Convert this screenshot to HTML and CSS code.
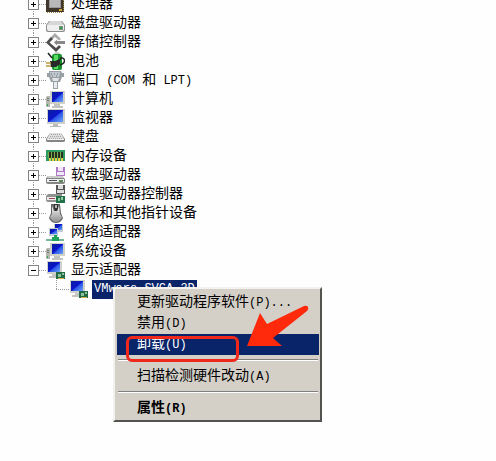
FILE: index.html
```html
<!DOCTYPE html>
<html lang="zh-CN">

<head>
    <meta charset="utf-8">
    <title>设备管理器</title>
    <link rel="stylesheet" href="styles.css">
</head>

<body>
    <!-- Shared icon parts -->
    <svg class="defs" aria-hidden="true">
        <defs>
            <linearGradient id="screen" x1="0" y1="0" x2="1" y2="1">
                <stop offset="0" stop-color="#0a1f9a" />
                <stop offset="0.5" stop-color="#0c14cc" />
                <stop offset="0.55" stop-color="#2a52e6" />
                <stop offset="1" stop-color="#6aa4fb" />
            </linearGradient>
            <linearGradient id="metal" x1="0" y1="0" x2="0" y2="1">
                <stop offset="0" stop-color="#f4f4f4" />
                <stop offset="1" stop-color="#8f9090" />
            </linearGradient>
            <symbol id="pc" viewBox="0 0 19 19">
                <path d="M8 14h6v2h3v2H6v-2h2z" fill="#c2c4c0" />
                <path d="M4 1h15v13H4z" fill="#cfd0c8" />
                <path d="M6 2h11v10H6z" fill="url(#screen)" />
                <path d="M1 6h3v11H0V7z" fill="#b4b8b0" />
                <path d="M1 8h2v1H1zM1 10h2v1H1z" fill="#707870" />
                <path d="M1 14h1v2H1z" fill="#38a050" />
            </symbol>
            <symbol id="display" viewBox="0 0 19 19">
                <path d="M6 12h6v3h2v2H3v-2h3z" fill="#c4c6c2" />
                <path d="M1 0h15v13H1z" fill="#d0d1ca" />
                <path d="M2 1h12v10H2z" fill="url(#screen)" />
                <path d="M10 11h9v7h-9z" fill="#246b45" />
                <path d="M12 13h3v3h-3zM16 12h2v2h-2z" fill="#8bc39a" />
                <path d="M12 17h6v1h-6z" fill="#d4b445" />
            </symbol>
        </defs>
    </svg>

    <ul class="tree">
        <li class="node">
            <div class="row">
                <button class="toggle" aria-label="展开"></button>
                <svg class="icon" viewBox="0 0 19 19">
                    <path d="M0 0h18v17H0z" fill="#40382c" />
                    <path d="M1 17.500h16M17.500 1v16" stroke="#a18b46" stroke-dasharray="1 1" />
                    <path d="M3 1h12v12H3z" fill="#999" />
                    <path d="M4 1h10v11H4z" fill="#b9b9b9" />
                    <path d="M13 14h3v2h-3z" fill="#d2a93e" />
                </svg>
                <span class="label">处理器</span>
            </div>
        </li>
        <li class="node">
            <div class="row">
                <button class="toggle" aria-label="展开"></button>
                <svg class="icon" viewBox="0 0 19 19">
                    <path d="M3 7h13l3 4v5q0 2-2 2H2q-2 0-2-2v-5z" fill="#8b8e8d" />
                    <path d="M4 7h11l3 4H1z" fill="#d6d8d8" />
                    <path d="M1 11h17v4q0 2-2 2H3q-2 0-2-2z" fill="#efefef" />
                    <path d="M13 12h4v4h-4z" fill="#7d9580" />
                    <path d="M14 13h2v2h-2z" fill="#2e9e43" />
                </svg>
                <span class="label">磁盘驱动器</span>
            </div>
        </li>
        <li class="node">
            <div class="row">
                <button class="toggle" aria-label="展开"></button>
                <svg class="icon" viewBox="0 0 19 19">
                    <path d="M9 0l6 6-2 1.500-4-3.500-4 3.500L3 6z" fill="#aaa" />
                    <path d="M5 4l2 2-3.500 3.500L10 15l3-3 2 2-5 5L0 9.500z" fill="#4c4c4c" />
                    <path d="M8 9.500l3-3V8h8v3h-8v1.500z" fill="#888" />
                </svg>
                <span class="label">存储控制器</span>
            </div>
        </li>
        <li class="node">
            <div class="row">
                <button class="toggle" aria-label="展开"></button>
                <svg class="icon" viewBox="0 0 19 19">
                    <path d="M8 1q3-2 6 0v2H8z" fill="#c3c9c1" />
                    <rect x="6" y="2" width="10" height="16" rx="2" fill="#16912b" />
                    <path d="M8 3h4v14H8z" fill="#56db60" />
                    <path d="M2 1l4 5M14 8q1-4 4-1 2 4-4 6" fill="none" stroke="#222" stroke-width="1.500" />
                    <path d="M4 9h5l5-2v5l-4 3H5z" fill="#282828" />
                    <path d="M0 11h5M0 14h5" stroke="#b89a3a" stroke-width="1.500" />
                </svg>
                <span class="label">电池</span>
            </div>
        </li>
        <li class="node">
            <div class="row">
                <button class="toggle" aria-label="展开"></button>
                <svg class="icon" viewBox="0 0 19 19">
                    <path d="M3 0h12l1 2h2v4h-2l-2 5h-2v7H7v-7H5L3 6H1V2h2z" fill="#98a0a6" />
                    <path d="M4 1h10l-1 5H5z" fill="#c1c9cf" />
                    <path d="M5 3h1M8 3h1M11 3h1M6 5h1M10 5h1" stroke="#64717b" />
                    <path d="M6 7h7l-1 3H7z" fill="#dfe4e8" />
                    <path d="M8 11h3v6H8z" fill="#e8ecef" />
                </svg>
                <span class="label">端口<span class="latin"> (COM </span>和<span class="latin"> LPT)</span></span>
            </div>
        </li>
        <li class="node">
            <div class="row">
                <button class="toggle" aria-label="展开"></button>
                <svg class="icon"><use href="#pc" /></svg>
                <span class="label">计算机</span>
            </div>
        </li>
        <li class="node">
            <div class="row">
                <button class="toggle" aria-label="展开"></button>
                <svg class="icon" viewBox="0 0 19 19">
                    <path d="M7 15h5v2h3v1H4v-1h3z" fill="#b7bab7" />
                    <path d="M1 0h18v15H1z" fill="#cdcec7" />
                    <path d="M2 1h15v12H2z" fill="url(#screen)" />
                </svg>
                <span class="label">监视器</span>
            </div>
        </li>
        <li class="node">
            <div class="row">
                <button class="toggle" aria-label="展开"></button>
                <svg class="icon" viewBox="0 0 19 19">
                    <path d="M4 5h11l4 6v2q0 1-2 1H2q-2 0-2-1v-2z" fill="#858585" />
                    <path d="M4 5h11l3 6H1z" fill="#dedede" />
                    <path d="M5 6.500h10M4 8.500h12M3 10.500h13" stroke="#a6a6a6" stroke-dasharray="1 1" />
                    <path d="M1 11h17v1H1z" fill="#f2f2f2" />
                </svg>
                <span class="label">键盘</span>
            </div>
        </li>
        <li class="node">
            <div class="row">
                <button class="toggle" aria-label="展开"></button>
                <svg class="icon" viewBox="0 0 19 19">
                    <path d="M0 3h19v11H0z" fill="#2f9a5e" />
                    <path d="M2 5h15v6H2z" fill="#80ad54" />
                    <path d="M3 5h2v6H3zM6 5h2v6H6zM9 5h2v6H9zM12 5h2v6h-2zM15 5h2v6h-2z" fill="#26301e" />
                    <path d="M3 12.500h14" stroke="#e2c942" stroke-width="3" stroke-dasharray="2 1" />
                </svg>
                <span class="label">内存设备</span>
            </div>
        </li>
        <li class="node">
            <div class="row">
                <button class="toggle" aria-label="展开"></button>
                <svg class="icon" viewBox="0 0 19 19">
                    <path d="M2 10h14l3 3v3q0 2-2 2H2q-2 0-2-2v-4z" fill="#858785" />
                    <path d="M2 10h14l2 2H1z" fill="#cbcdcb" />
                    <path d="M1 13h17v3H1z" fill="#eee" />
                    <path d="M3 14h8v1H3z" fill="#4d4d60" />
                    <path d="M13 14h4v2h-4z" fill="#5a8a53" />
                    <path d="M10 1h9v9h-9z" fill="#ad79c8" />
                    <path d="M12 1h5v4h-5zM11 6h7v3h-7z" fill="#f0e8f4" />
                </svg>
                <span class="label">软盘驱动器</span>
            </div>
        </li>
        <li class="node">
            <div class="row">
                <button class="toggle" aria-label="展开"></button>
                <svg class="icon" viewBox="0 0 19 19">
                    <path d="M2 9h14v8H2q-2 0-2-2v-4z" fill="#919391" />
                    <path d="M1 12h12v3H1z" fill="#ececec" />
                    <path d="M3 13h6v1H3z" fill="#a04858" />
                    <path d="M10 0h9v9h-9z" fill="#555" />
                    <path d="M12 0h5v4h-5zM11 5h7v3h-7z" fill="#ddd" />
                    <path d="M10 11h9v7h-9z" fill="#20724a" />
                    <path d="M12 13h2v3h-2zM15 12h2v3h-2z" fill="#9acb9f" />
                </svg>
                <span class="label">软盘驱动器控制器</span>
            </div>
        </li>
        <li class="node">
            <div class="row">
                <button class="toggle" aria-label="展开"></button>
                <svg class="icon" viewBox="0 0 19 19">
                    <path d="M5 0h9l1 9 2 5q-2 5-7 5t-7-5l2-5z" fill="#686868" />
                    <path d="M6 2l2 5h3l2-5 1 8 2 3q-2 5-6 5t-6-5l2-3z" fill="url(#metal)" />
                    <path d="M8 0h4v4l-1 3H9L8 4z" fill="#303030" />
                    <path d="M9 1h2v3H9z" fill="#b5b5b5" />
                </svg>
                <span class="label">鼠标和其他指针设备</span>
            </div>
        </li>
        <li class="node">
            <div class="row">
                <button class="toggle" aria-label="展开"></button>
                <svg class="icon" viewBox="0 0 19 19">
                    <path d="M8 1h9v8H8z" fill="#c2cad2" />
                    <path d="M9 1h7v6H9z" fill="url(#screen)" />
                    <path d="M3 5h9v8H3z" fill="#c2cad2" />
                    <path d="M4 6h7v5H4z" fill="url(#screen)" />
                    <path d="M0 16h18v2H0z" fill="#73b896" />
                    <path d="M8 12h3v2h2v4H6v-4h2z" fill="#1fa45c" />
                </svg>
                <span class="label">网络适配器</span>
            </div>
        </li>
        <li class="node">
            <div class="row">
                <button class="toggle" aria-label="展开"></button>
                <svg class="icon"><use href="#pc" /></svg>
                <span class="label">系统设备</span>
            </div>
        </li>
        <li class="node open">
            <div class="row">
                <button class="toggle" aria-label="折叠"></button>
                <svg class="icon"><use href="#display" /></svg>
                <span class="label">显示适配器</span>
            </div>
            <ul class="children">
                <li class="row child">
                    <svg class="icon"><use href="#display" /></svg>
                    <span class="label selected latin">VMware SVGA 3D</span>

                    <div class="menu" role="menu">
                        <button class="item" role="menuitem">更新驱动程序软件<span class="latin">(P)...</span></button>
                        <button class="item" role="menuitem">禁用<span class="latin">(D)</span></button>
                        <button class="item active" role="menuitem">卸载<span class="latin">(U)</span></button>
                        <hr>
                        <button class="item" role="menuitem">扫描检测硬件改动<span class="latin">(A)</span></button>
                        <hr>
                        <button class="item default" role="menuitem">属性<span class="latin">(R)</span></button>

                        <div class="highlight"></div>
                        <svg class="arrow" viewBox="0 0 62 42">
                            <path d="M0 41L13 8l7 11L57 1q3-1 4 1t-1 4L26 33l9 8z" fill="#ff2a0c" />
                        </svg>
                    </div>
                </li>
            </ul>
        </li>
    </ul>
</body>

</html>
```
FILE: styles.css
```css
body {
    display: flow-root;
    min-height: 100vh;
    margin: 0;
    background-color: #fefefe;
    color: #000;
    font-family: "Liberation Mono", "Noto Sans CJK SC", monospace;
    font-size: 14px;
}

.defs {
    position: absolute;
    width: 0;
    height: 0;
}

ul {
    list-style: none;
    margin: 0;
    padding: 0;
}

/* the list is scrolled a little, the first row is cut */
.tree {
    margin-top: -5px;
    padding-left: 28px;
}

/* dotted line that joins the toggles */
.node {
    background: repeating-linear-gradient(to bottom, #999 0 1px, transparent 1px 2px) 5px 0 / 1px 100% no-repeat;
}

.node.open {
    background-size: 1px 9px;
}

.row {
    display: flex;
    align-items: center;
    height: 19px;
    line-height: 19px;
    white-space: nowrap;
}

.row::before {
    content: "";
    order: 1;
    width: 7px;
    height: 1px;
    background: repeating-linear-gradient(to right, #999 0 1px, transparent 1px 2px);
}

.toggle {
    width: 11px;
    height: 11px;
    padding: 0;
    border: 1px solid #848484;
    background: linear-gradient(#000, #000) center / 5px 1px no-repeat,
        linear-gradient(#000, #000) center / 1px 5px no-repeat,
        #fff;
}

.open .toggle {
    background: linear-gradient(#000, #000) center / 5px 1px no-repeat, #fff;
}

.icon {
    order: 2;
    flex: none;
    width: 19px;
    height: 19px;
}

.label {
    order: 3;
    margin-left: 6px;
}

.latin {
    font-size: 12px;
}

.children {
    padding-left: 28px;
}

.child {
    position: relative;
}

.child::before {
    width: 13px;
    height: 10px;
    align-self: flex-start;
    background: repeating-linear-gradient(to bottom, #999 0 1px, transparent 1px 2px) left / 1px 100% no-repeat,
        repeating-linear-gradient(to right, #999 0 1px, transparent 1px 2px) bottom / 100% 1px no-repeat;
}

.selected {
    margin-left: 4px;
    padding: 0 2px;
    background-color: #0a246a;
    color: #fff;
}

/* Context menu */
.menu {
    position: absolute;
    top: 7px;
    left: 57px;
    box-sizing: border-box;
    width: 209px;
    padding: 3px 1px 1px 2px;
    background-color: #d4d0c8;
    border: 2px solid;
    border-color: #f4f2ee #55534f #55534f #f4f2ee;
}

.item {
    display: block;
    width: 100%;
    height: 21px;
    padding: 0 0 0 20px;
    border: none;
    background: none;
    color: #000;
    font-family: inherit;
    font-size: 14px;
    line-height: 21px;
    text-align: left;
    white-space: nowrap;
}

.item.active {
    background-color: #0a246a;
    color: #fff;
}

.item.default {
    font-weight: bold;
}

.menu hr {
    height: 1px;
    margin: 4px 1px 5px;
    border: none;
    border-top: 1px solid #808080;
    background-color: #fff;
}

/* Marks on top of the menu */
.highlight {
    position: absolute;
    top: 47px;
    left: 11px;
    box-sizing: border-box;
    width: 113px;
    height: 26px;
    border: 3px solid #f0281c;
    border-radius: 6px;
    pointer-events: none;
}

.arrow {
    position: absolute;
    top: 16px;
    left: 132px;
    width: 62px;
    height: 42px;
    pointer-events: none;
}
```
